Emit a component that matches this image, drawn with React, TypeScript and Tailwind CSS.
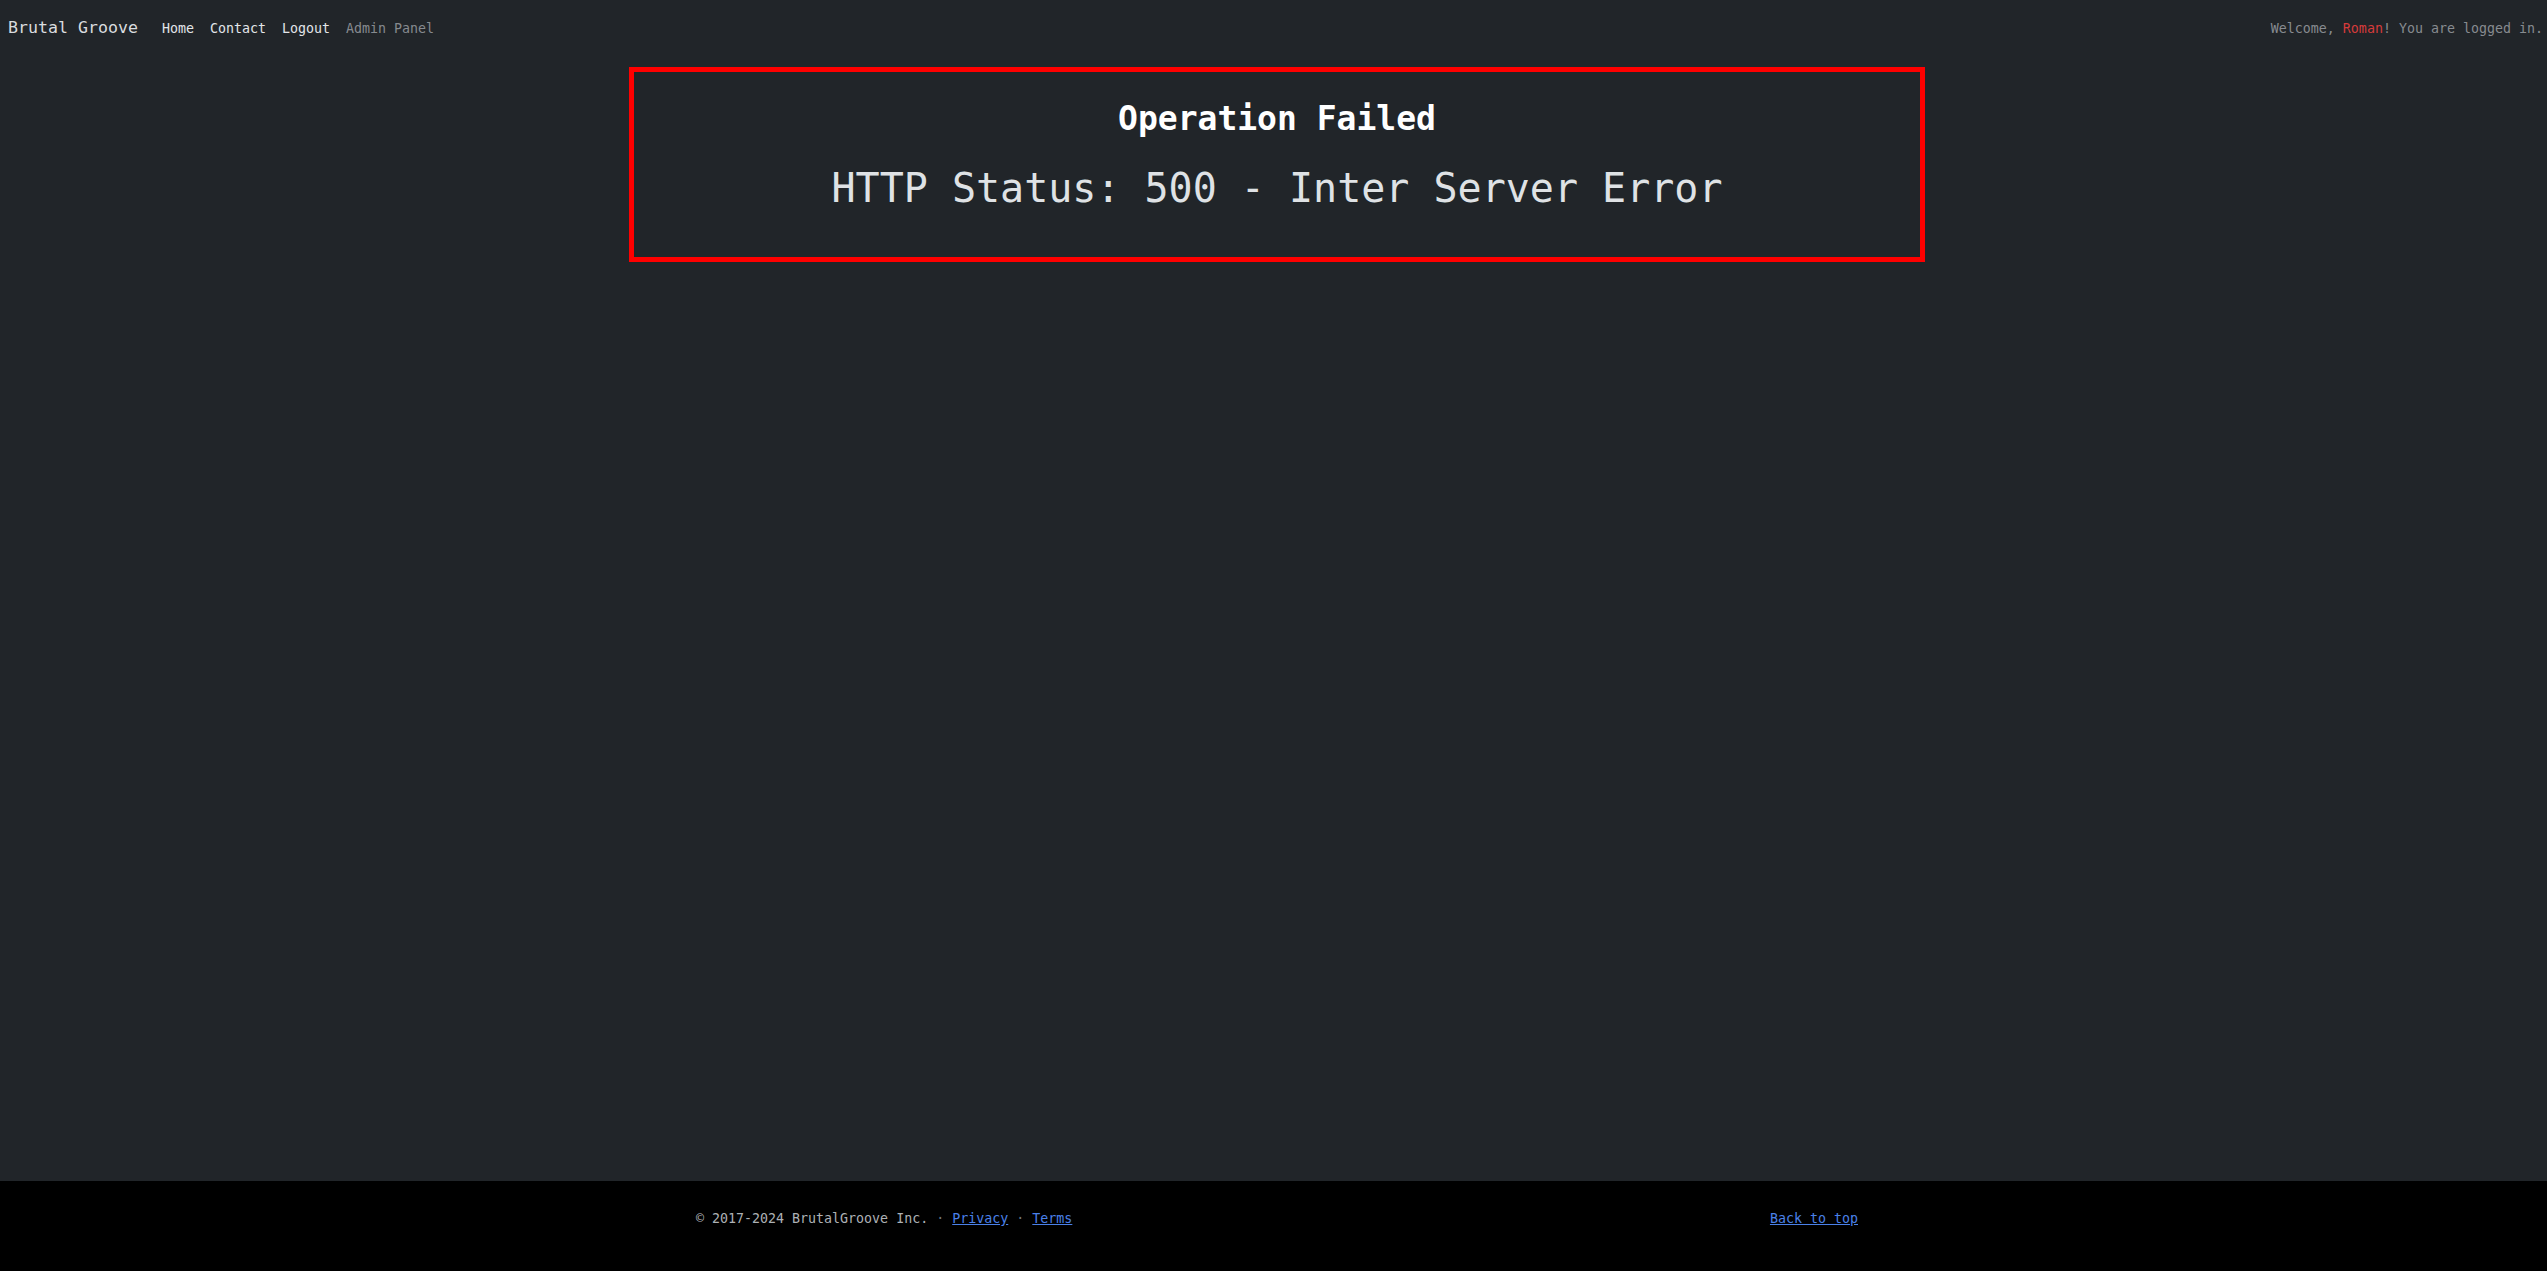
import React from "react";

const mono = "font-['DejaVu_Sans_Mono','Liberation_Mono',monospace]";

export default function App() {
  return (
    <div className={`min-h-screen flex flex-col bg-[#212529] ${mono}`}>
      <nav className="h-[56px] flex items-baseline justify-between pt-[16px] pl-[8px] pr-[4px]">
        <div className="flex items-baseline">
          <a className="text-[16.6px] leading-[24px] text-[#d9dcdf] mr-[16px]">Brutal Groove</a>
          <a className="text-[13.3px] leading-[20px] text-[#e3e6e9] px-[8px]">Home</a>
          <a className="text-[13.3px] leading-[20px] text-[#e3e6e9] px-[8px]">Contact</a>
          <a className="text-[13.3px] leading-[20px] text-[#e3e6e9] px-[8px]">Logout</a>
          <a className="text-[13.3px] leading-[20px] text-[#868a8f] px-[8px]">Admin Panel</a>
        </div>
        <div className="text-[13.3px] leading-[20px] text-[#878b90]">
          Welcome, <span className="text-[#d63b3b]">Roman</span>! You are logged in.
        </div>
      </nav>
      <main className="flex-1 pl-[7px]">
        <div className="w-[1296px] mx-auto mt-[11px] border-[5px] border-[#ff0000] pt-[27px] pb-[45px] text-center">
          <h1 className="text-[33px] leading-[40px] font-bold text-white">Operation Failed</h1>
          <p className="mt-[25px] text-[40px] leading-[48px] text-[#dfe2e5]">HTTP Status: 500 - Inter Server Error</p>
        </div>
      </main>
      <footer className="h-[90px] bg-black pl-[7px]">
        <div className="w-[1162px] mx-auto flex justify-between pt-[28px] text-[13.3px] leading-[20px]">
          <p className="text-[#adb1b5]">
            © 2017-2024 BrutalGroove Inc. <span className="text-[#6c757d]">·</span>{" "}
            <a className="text-[#4a80e8] underline">Privacy</a>{" "}
            <span className="text-[#6c757d]">·</span>{" "}
            <a className="text-[#4a80e8] underline">Terms</a>
          </p>
          <a className="text-[#4a80e8] underline">Back to top</a>
        </div>
      </footer>
    </div>
  );
}
